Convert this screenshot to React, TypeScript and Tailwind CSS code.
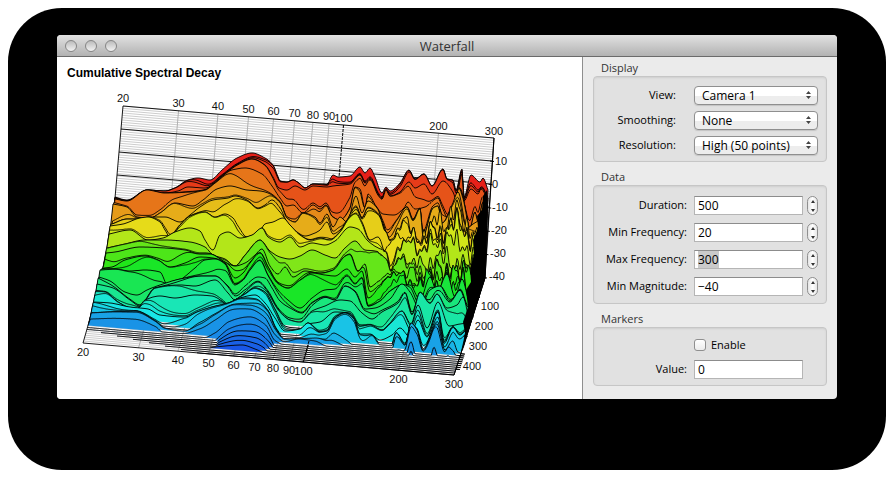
import { useEffect, useRef, type ReactNode } from "react";

type Point = [number, number];

/** One measured slice of the decay surface: hue, then x/y pairs. */
const KEYS: [number, number[]][] = [
  [2, [115,197,127,200,147,190,165,191,175,188,188,180,198,178,210,180,222,170,237,158,252,153,265,158,273,165,278,177,280,181,287,182,293,180,300,184,305,188,313,184,327,184,333,175,338,177,350,176,360,167,365,173,370,168,375,177,382,193,386,187,390,191,400,183,409,170,415,179,424,174,432,186,443,169,447,179,453,180,456,190,462,169,464,197,471,175,480,182,483,178,488,190]],
  [17, [115,198,127,201,147,191,165,193,178,191,188,187,205,188,222,176,237,165,252,159,265,165,273,177,279,188,287,190,295,186,305,190,313,186,327,187,333,186,350,184,360,175,365,183,370,179,378,195,382,199,386,190,390,196,400,192,409,182,415,188,424,184,432,194,443,181,453,192,456,199,462,174,464,201,471,189,478,194,481,189,488,200]],
  [27, [115,199,127,201,147,190,165,193,190,192,205,190,215,183,232,170,245,168,262,174,272,186,280,198,287,206,293,205,303,213,313,205,320,209,326,205,332,216,340,220,350,208,355,187,360,189,365,208,368,194,376,206,383,214,394,215,404,208,408,202,415,209,425,207,438,198,442,207,448,218,455,202,459,188,463,198,470,228,475,212,478,222,483,202,488,214]],
  [38, [113,204,127,207,137,217,150,218,160,213,175,203,193,206,203,200,217,189,230,186,247,190,260,191,268,193,280,202,287,218,295,222,303,213,315,217,320,223,327,214,333,227,340,217,347,222,356,196,362,213,368,201,377,208,383,223,387,233,397,220,407,207,413,220,420,208,423,236,433,208,438,206,442,223,452,205,458,192,467,228,473,224,480,219,483,208,487,225]],
  [48, [112,224,127,219,138,219,150,217,165,217,180,222,190,215,200,207,213,200,228,198,235,196,247,200,258,208,265,205,272,200,280,208,287,222,297,232,305,236,315,233,320,230,327,222,333,234,340,230,347,220,356,207,362,218,368,208,378,214,385,230,390,240,397,232,405,218,413,232,420,240,430,226,438,216,445,228,452,212,458,206,464,224,472,232,480,235,487,228]],
  [57, [110,226,123,224,140,218,148,217,160,222,165,230,170,237,180,225,190,216,205,212,215,217,225,214,233,218,238,226,247,237,258,234,265,224,273,222,283,218,290,225,300,235,310,240,320,238,330,240,340,232,350,217,356,213,362,222,370,240,378,237,385,250,392,240,400,235,405,242,412,232,422,245,432,226,440,237,447,232,452,222,458,218,465,237,474,242,486,240]],
  [75, [109,234,130,230,148,240,163,238,175,232,190,228,200,231,205,240,213,250,220,235,228,232,240,238,252,235,262,228,268,237,280,242,290,237,300,247,312,243,325,245,335,241,350,227,358,229,368,241,378,248,385,251,391,269,398,250,410,240,420,253,432,240,440,247,450,236,458,241,466,252,475,256,485,252]],
  [90, [107,248,125,244,145,240,165,240,190,242,205,247,213,255,225,259,235,266,245,255,260,240,270,251,280,257,290,259,300,256,312,250,325,255,335,258,345,248,355,241,365,250,375,251,385,258,392,270,400,256,410,263,420,261,427,268,437,257,445,254,455,272,461,258,468,268,475,264,484,268]],
  [105, [106,253,115,252,140,247,165,248,185,250,200,254,210,254,225,262,235,266,245,263,255,255,262,249,270,266,278,274,285,267,293,277,305,271,320,273,333,270,345,256,350,254,358,271,365,264,370,287,375,284,385,276,395,271,405,275,412,268,420,279,430,276,438,265,445,276,453,268,460,275,468,264,474,283,483,280]],
  [118, [104,268,112,267,125,260,145,256,158,260,170,267,185,263,200,257,213,258,225,263,235,278,243,273,250,263,260,253,268,267,278,283,288,288,300,280,312,273,325,275,335,276,347,269,355,277,362,271,368,298,380,286,390,276,402,273,410,285,420,284,428,273,437,290,445,278,453,289,460,274,470,290,482,285]],
  [130, [101,269,115,269,130,271,145,270,160,272,168,286,180,280,195,268,205,260,215,259,225,264,235,284,243,280,250,270,260,260,268,275,278,290,288,300,300,308,312,298,325,290,335,289,347,276,355,284,362,278,368,306,380,301,390,291,402,285,410,285,420,300,430,277,437,292,447,274,455,297,462,279,470,302,481,297]],
  [143, [99,277,110,281,125,292,137,295,147,290,160,285,180,279,200,276,215,276,228,286,235,294,245,286,258,277,265,278,272,288,280,301,290,308,302,313,312,303,325,297,335,300,345,286,355,291,365,309,375,308,390,299,402,284,410,292,420,309,430,290,440,286,450,301,460,290,468,307,480,306]],
  [155, [97,284,113,288,130,300,140,306,155,288,180,285,195,286,215,280,228,293,235,300,245,292,258,282,268,292,278,309,290,320,300,322,312,311,325,306,340,300,350,301,362,313,372,319,382,312,398,303,405,293,412,314,420,292,430,303,437,294,447,308,457,305,463,297,470,319,479,312]],
  [166, [96,291,105,292,118,302,130,308,137,309,145,300,160,296,175,298,195,295,212,296,222,301,228,305,235,300,245,294,255,288,265,292,275,309,285,326,300,329,308,324,320,322,335,312,350,313,360,326,370,325,382,330,390,323,402,311,411,324,418,305,427,328,438,302,449,326,460,324,470,323,478,330]],
  [180, [94,302,110,303,130,307,148,309,160,315,185,317,197,312,212,307,228,303,240,298,255,295,265,303,275,318,285,331,300,329,308,323,320,332,327,331,335,318,345,313,354,319,360,334,370,334,380,340,392,335,400,328,410,337,418,320,427,337,438,312,444,342,453,327,460,335,467,330,476,345]],
  [193, [92,312,115,311,135,311,155,321,165,328,185,331,200,321,213,312,228,304,242,299,256,300,268,311,276,329,285,339,310,339,325,339,335,325,347,320,355,329,362,346,372,336,380,346,391,348,396,333,405,345,411,323,417,330,423,350,437,324,445,350,453,340,458,350,462,350,475,353]],
  [203, [91,313,115,312,135,313,155,322,165,331,183,331,200,325,215,315,235,305,250,306,264,314,275,332,284,340,300,335,315,336,325,341,390,360,403,360,411,338,418,360,429,360,434,338,440,360,443,360,448,348,452,360,473,370]],
  [212, [88,340,205,342,215,338,229,326,250,320,266,328,275,343,405,375,411,355,417,375,473,385]],
  [221, [87,350,210,350,220,340,238,332,255,333,270,344,280,360,469,385]],
  [235, [84,360,195,360,205,349,225,346,242,345,255,349,265,354,275,370,465,390]],
];

const floorY = (x: number, t: number) => 246 + 97 * t + ((x - 111 + 28 * t) * 32) / 371;
const leftX = (t: number) => 111 - 28 * t;
const rightX = (t: number) => 485 - 31 * t;

function toPoints(flat: number[]): Point[] {
  const out: Point[] = [];
  for (let i = 0; i < flat.length; i += 2) out.push([flat[i], flat[i + 1]]);
  return out;
}

/** Monotone cubic through the points, so peaks stay where they are. */
function spline(p: Point[]) {
  const n = p.length;
  const d = p.slice(1).map((q, i) => (q[1] - p[i][1]) / (q[0] - p[i][0]));
  const m = p.map((_, i) => {
    if (i === 0) return d[0];
    if (i === n - 1) return d[n - 2];
    const a = d[i - 1];
    const b = d[i];
    return a * b <= 0 ? 0 : (2 * a * b) / (a + b);
  });
  return (x: number) => {
    if (x <= p[0][0]) return p[0][1];
    if (x >= p[n - 1][0]) return p[n - 1][1];
    let i = 0;
    while (p[i + 1][0] < x) i++;
    const h = p[i + 1][0] - p[i][0];
    const s = (x - p[i][0]) / h;
    return (
      p[i][1] * (1 + 2 * s) * (1 - s) * (1 - s) +
      h * m[i] * s * (1 - s) * (1 - s) +
      p[i + 1][1] * s * s * (3 - 2 * s) +
      h * m[i + 1] * s * s * (s - 1)
    );
  };
}

const curves = KEYS.map(([hue, flat]) => {
  const p = toPoints(flat);
  return { hue, first: p[0][0], last: p[p.length - 1][0], at: spline(p) };
});

interface Slice {
  fill: string;
  body: string;
  line: string;
}

function makeSlice(hue: number): Slice {
  const t = hue / 250;
  let k = 0;
  while (k < curves.length - 2 && curves[k + 1].hue < hue) k++;
  const a = curves[k];
  const b = curves[k + 1];
  const s = Math.min(1, (hue - a.hue) / (b.hue - a.hue));
  const tail = hue > 237;
  const late = t > 0.86;
  const start = late ? 85 + (t - 0.86) * 800 : a.first + (b.first - a.first) * s;
  const end = tail ? rightX(t) : Math.min(a.last + (b.last - a.last) * s, rightX(t) + 4);
  const pts: Point[] = [];
  for (let x = start; x < end + 1; x += 1) {
    const px = Math.min(x, end);
    // Decay is uneven over frequency: neighbouring slices bunch up in places.
    const w = s === 0 || s === 1 || hue > 200 ? s : Math.pow(s, Math.exp(1.9 * Math.sin(px / 21 + k * 2.1)));
    const rough = Math.min(1, Math.max(0, (px - 375) / 70));
    const spikes =
      hue > 44 && hue < 128
        ? rough * (6 * Math.sin(px * 0.72 + k * 0.5) + 5 * Math.sin(px * 1.17 - k * 0.4))
        : 0;
    const y = tail ? 999 : a.at(px) + (b.at(px) - a.at(px)) * w + spikes;
    pts.push([px, Math.min(y, floorY(px, t))]);
  }
  const top = pts.map(([x, y]) => `${x.toFixed(1)} ${y.toFixed(1)}`).join("L");
  const l = Math.max(leftX(t), late ? start : 0);
  const r = rightX(t);
  const line = `M${l} ${floorY(l, t)}L${top}L${r} ${floorY(r, t)}`;
  const shade = hue > 203 ? 203 + (hue - 203) * 0.6 : hue;
  return { fill: `hsl(${shade} 80% 50%)`, body: `${line}Z`, line };
}

/** Key slices, the ones between them, and a finer series near the front. */
const HUES = [
  ...curves.map((c) => c.hue).filter((h) => h < 170),
  6, 10, 22, 33, 43, 53, 66, 98, 112, 124, 137, 149, 161,
  ...Array.from({ length: 17 }, (_, i) => 170 + i * 5),
].sort((p, q) => p - q);

const SLICES = HUES.map(makeSlice);
const FREQS = [20, 30, 40, 50, 60, 70, 80, 90, 100, 200, 300];
const pos = (f: number) => Math.log(f / 20) / Math.log(15);
const LEVELS = [10, 0, -10, -20, -30, -40];
const TIMES = [100, 200, 300, 400];

function Waterfall() {
  return (
    <svg viewBox="57 57 525 342" className="block w-full" role="img" aria-label="Cumulative Spectral Decay">
      <text x="67" y="77" className="font-['Liberation_Sans',Arial,sans-serif] text-[12px] font-bold">
        Cumulative Spectral Decay
      </text>
      <g fill="none" stroke="#cdcdcd">
        {Array.from({ length: 60 }, (_, i) => {
          const y = i * 2.33;
          return <path key={i} d={`M${123 - i * 0.2} ${106 + y}L${494 - i * 0.16} ${138 + y}`} />;
        })}
        {Array.from({ length: 50 }, (_, i) => {
          const t = i / 50;
          return <path key={i} d={`M${leftX(t)} ${246 + 97 * t}L${rightX(t)} ${278 + 97 * t}`} />;
        })}
      </g>
      <g fill="none" stroke="#b0b0b0">
        {FREQS.slice(1, -1).map((f) => {
          const x = 123 + 371 * pos(f);
          const y = 106 + 32 * pos(f);
          return (
            <path
              key={f}
              d={`M${x} ${y}l-12 140l-28 97`}
              stroke={f === 100 ? "#000" : undefined}
              strokeDasharray={f === 100 ? "3 1" : undefined}
            />
          );
        })}
      </g>
      <g fill="none" stroke="#000" strokeWidth="0.9">
        <path d="M115 198L123 106L494 138L485 278L454 375L83 343L91 315" />
        <path d="M121 129L492 161M119 152L491 184M117 175L489 207" />
      </g>
      <g strokeLinejoin="round">
        {SLICES.map((s, i) => (
          <g key={i}>
            <path d={s.body} fill={s.fill} />
            <path d={s.line} fill="none" stroke="#000" strokeWidth="0.9" />
          </g>
        ))}
        <path d="M487 190L488 205L485 278L463 350L465 333L463 322L468 307L466 290L471 282L470 268L474 255L473 240L478 228L477 216L482 210L483 196Z" />
        <path d="M309 341L303 362" stroke="#000" strokeDasharray="3 1" />
      </g>
      <g stroke="#000" fill="none">
        <path d="M494 138L487 240L485 278L454 375" />
        {LEVELS.map((v, i) => (
          <path key={v} d={`M${490 - i * 1.4} ${161 + i * 23.3}l4 0.5`} />
        ))}
        {TIMES.map((v, i) => (
          <path key={v} d={`M${476 - i * 6.2} ${297 + i * 19.5}l4 0.5`} />
        ))}
      </g>
      <g className="font-['Liberation_Sans',Arial,sans-serif] text-[11px]" fill="#111" textAnchor="middle">
        {FREQS.map((f) => (
          <text key={f} x={123 + 371 * pos(f)} y={102 + 33 * pos(f)}>
            {f}
          </text>
        ))}
        {FREQS.map((f) => (
          <text key={f} x={83 + 371 * pos(f)} y={356 + 32 * pos(f)}>
            {f}
          </text>
        ))}
        {LEVELS.map((v, i) => (
          <text key={v} x={(v < 0 ? 500 : v ? 501 : 495) - Math.max(0, i - 2)} y={165 + i * 23}>
            {v}
          </text>
        ))}
        {TIMES.map((v, i) => (
          <text key={v} x={490 - i * 6} y={310 + i * 20}>
            {v}
          </text>
        ))}
      </g>
    </svg>
  );
}

function Group({ title, className = "", children }: { title: string; className?: string; children: ReactNode }) {
  return (
    <section className={className}>
      <h2 className="h-4 pl-2 leading-4 text-[#333]">{title}</h2>
      <div className="rounded-[4px] border border-[#c6c6c6] bg-[#e1e1e1] pt-[9px] pr-2 pb-[6px] shadow-[inset_0_1px_2px_#cfcfcf]">
        {children}
      </div>
    </section>
  );
}

function Choice({ id, label, value }: { id: string; label: string; value: string }) {
  return (
    <div className="flex items-center">
      <label htmlFor={id} className="flex-1 pr-[18px] text-right">
        {label}
      </label>
      <div className="relative w-[124px]">
        <select
          id={id}
          className="block h-[19px] w-full appearance-none rounded-[4px] border border-[#8f8f8f] bg-linear-to-b from-white from-50% to-[#ededed] to-50% pl-[7px] text-[12px] leading-[17px] font-normal shadow-[0_1px_1px_#c4c4c4]"
        >
          <option>{value}</option>
        </select>
        <svg viewBox="0 0 5 8" className="pointer-events-none absolute top-[5px] right-[7px] h-2 w-[5px]" fill="#444">
          <path d="M0 3L2.5 0L5 3ZM0 5L2.5 8L5 5Z" />
        </svg>
      </div>
    </div>
  );
}

const FIELD =
  "block h-[19px] w-[109px] border border-[#b5b5b5] border-t-[#8c8c8c] bg-white pl-[3px] text-[12px] leading-[17px] outline-none selection:bg-[#cacaca] selection:text-black";

function NumberField({ id, label, value, selected }: { id: string; label: string; value: string; selected?: boolean }) {
  const ref = useRef<HTMLInputElement>(null);
  useEffect(() => {
    if (selected) ref.current?.select();
  }, [selected]);
  return (
    <div className="flex items-center">
      <label htmlFor={id} className="flex-1 pr-[7px] text-right">
        {label}
      </label>
      <input id={id} ref={ref} type="text" defaultValue={value} className={FIELD} />
      <div className="ml-1 flex h-[19px] w-[11px] flex-col overflow-hidden rounded-full border border-[#8f8f8f] bg-linear-to-r from-[#e6e6e6] via-white to-[#e6e6e6]">
        <button type="button" aria-label={`Increase ${label}`} className="flex flex-1 items-end justify-center pb-[3px]">
          <svg viewBox="0 0 4 3" className="h-[3px] w-1" fill="#333">
            <path d="M0 3L2 0L4 3Z" />
          </svg>
        </button>
        <button type="button" aria-label={`Decrease ${label}`} className="flex flex-1 items-start justify-center pt-[3px]">
          <svg viewBox="0 0 4 3" className="h-[3px] w-1" fill="#333">
            <path d="M0 0L2 3L4 0Z" />
          </svg>
        </button>
      </div>
    </div>
  );
}

export default function App() {
  return (
    <div className="bg-white p-2 font-['Open_Sans','Noto_Sans',sans-serif] text-[11px] text-black">
      <div className="rounded-[54px] bg-black px-[49px] pt-[27px] pb-[71px]">
        <main className="overflow-hidden rounded-[4px] bg-[#ebebeb]">
          <header className="flex h-[22px] items-center border-b border-[#6a6a6a] bg-linear-to-b from-[#e2e2e2] to-[#b2b2b2] px-2">
            <div className="flex w-[60px] gap-2">
              {["Close", "Minimize", "Zoom"].map((name) => (
                <button
                  key={name}
                  type="button"
                  aria-label={name}
                  className="size-3 rounded-full border border-[#858585] bg-linear-to-b from-[#bcbcbc] to-[#f2f2f2]"
                />
              ))}
            </div>
            <h1 className="flex-1 pr-[60px] text-center text-[13px] leading-5 text-[#333]">Waterfall</h1>
          </header>
          <div className="flex">
            <div className="min-w-0 flex-1 bg-white">
              <Waterfall />
            </div>
            <aside className="w-[255px] shrink-0 border-l border-[#8e8e8e] px-[10px] pt-[3px] font-medium">
              <Group title="Display">
                <div className="flex flex-col gap-[6px]">
                  <Choice id="view" label="View:" value="Camera 1" />
                  <Choice id="smoothing" label="Smoothing:" value="None" />
                  <Choice id="resolution" label="Resolution:" value="High (50 points)" />
                </div>
              </Group>
              <Group title="Data" className="mt-[7px]">
                <div className="flex flex-col gap-2 py-[1px]">
                  <NumberField id="duration" label="Duration:" value="500" />
                  <NumberField id="min-frequency" label="Min Frequency:" value="20" />
                  <NumberField id="max-frequency" label="Max Frequency:" value="300" selected />
                  <NumberField id="min-magnitude" label="Min Magnitude:" value="−40" />
                </div>
              </Group>
              <Group title="Markers" className="mt-[7px]">
                <div className="flex h-4 items-center pl-[100px]">
                  <input
                    id="enable"
                    type="checkbox"
                    className="size-3 appearance-none rounded-[3px] border border-[#8f8f8f] bg-linear-to-b from-white to-[#ececec]"
                  />
                  <label htmlFor="enable" className="pl-[5px]">
                    Enable
                  </label>
                </div>
                <div className="mt-[7px] flex items-center pr-[15px]">
                  <label htmlFor="value" className="flex-1 pr-[7px] text-right">
                    Value:
                  </label>
                  <input id="value" type="text" defaultValue="0" className={FIELD} />
                </div>
              </Group>
            </aside>
          </div>
        </main>
      </div>
    </div>
  );
}
